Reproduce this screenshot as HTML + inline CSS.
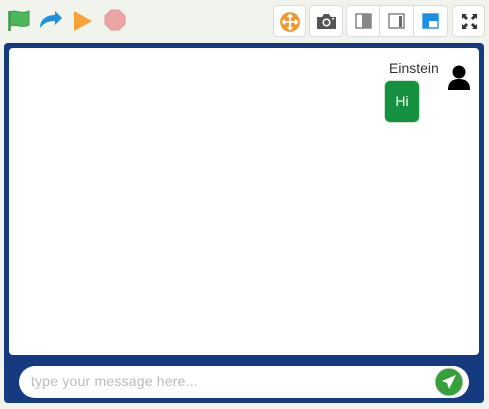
<!DOCTYPE html>
<html><head><style>
body{margin:0;width:489px;height:409px;background:#f0f4ec;font-family:"Liberation Sans",sans-serif;position:relative;overflow:hidden}
.a{position:absolute}
.btn{position:absolute;top:5px;height:32px;background:#fff;border:1px solid #dcdcdc;border-radius:4px;box-sizing:border-box}
</style></head><body>
<svg class="a" style="left:0;top:0" width="135" height="40" viewBox="0 0 135 40">
<path d="M9.5 11 V31" stroke="#3a9a48" stroke-width="2.5"/>
<path d="M10 12 C16 9,21 15,29 11 V25 C21 29,16 23,10 26Z" fill="#4cb75a" stroke="#3a9a48" stroke-width="1"/>
<path d="M40 28 C40 19,47 15,55 15 V11 L62 18 L55 25 V21 C48 21,44 23,40 28Z" fill="#1e90e0"/>
<path d="M74 11 L92 21 L74 31Z" fill="#f9a134"/>
<path d="M111 10 H119 L125 16 V24 L119 30 H111 L105 24 V16Z" fill="#eca4a4" stroke="#e69a9a"/>
</svg>
<div class="btn" style="left:273px;width:33px"><svg class="a" style="left:5px;top:5px" width="22" height="22" viewBox="0 0 20 20"><circle cx="10" cy="10" r="9" fill="#f2972e"/><path d="M10 3V17M3 10H17M10 3l-2 2.5M10 3l2 2.5M10 17l-2-2.5M10 17l2-2.5M3 10l2.5-2M3 10l2.5 2M17 10l-2.5-2M17 10l-2.5 2" stroke="#fff" stroke-width="1.6" fill="none"/></svg></div>
<div class="btn" style="left:309px;width:34px"><svg class="a" style="left:6px;top:7px" width="21" height="17" viewBox="0 0 21 17"><path d="M1 4H6L8 1H13L15 4H20V16H1Z" fill="#555"/><circle cx="10.5" cy="9.5" r="4" fill="#fff"/><circle cx="10.5" cy="9.5" r="2.5" fill="#555"/><rect x="16" y="5" width="2" height="1.4" fill="#fff"/></svg></div>
<div class="btn" style="left:346px;width:102px"></div>
<div class="a" style="left:379px;top:5px;width:1px;height:32px;background:#dcdcdc"></div>
<div class="a" style="left:413px;top:5px;width:1px;height:32px;background:#dcdcdc"></div>
<svg class="a" style="left:355px;top:13px" width="17" height="16"><rect x="1" y="1" width="15" height="14" fill="#fff" stroke="#666" stroke-width="1.2"/><rect x="7" y="1" width="9" height="14" fill="#888"/></svg>
<svg class="a" style="left:388px;top:13px" width="17" height="16"><rect x="1" y="1" width="15" height="14" fill="#fff" stroke="#666" stroke-width="1.2"/><rect x="11" y="3" width="3" height="11" fill="#666"/></svg>
<svg class="a" style="left:422px;top:13px" width="17" height="16"><rect x="1" y="1" width="15" height="14" fill="#fff" stroke="#1e8fe0" stroke-width="1.4"/><rect x="1" y="1" width="6" height="14" fill="#1e8fe0"/><rect x="7" y="1" width="9" height="7" fill="#1e8fe0"/></svg>
<div class="btn" style="left:452px;width:33px"><svg class="a" style="left:9px;top:8px" width="15" height="15" viewBox="0 0 15 15" fill="#333"><path d="M0 0H5L3.5 1.5L6 4L4 6L1.5 3.5L0 5ZM15 0V5L13.5 3.5L11 6L9 4L11.5 1.5L10 0ZM0 15V10L1.5 11.5L4 9L6 11L3.5 13.5L5 15ZM15 15H10L11.5 13.5L9 11L11 9L13.5 11.5L15 10Z"/></svg></div>
<div class="a" style="left:4px;top:43px;width:480px;height:360px;background:#163a80;border-radius:4px"></div>
<div class="a" style="left:9px;top:48px;width:470px;height:307px;background:#fff;border-radius:4px"></div>
<div class="a" style="left:389px;top:60px;font-size:14px;color:#333">Einstein</div>
<svg class="a" style="left:447px;top:65px" width="24" height="26" viewBox="0 0 24 26"><circle cx="12" cy="7" r="6.5" fill="#000"/><path d="M1 25 C1 17,5 14,12 14 C19 14,23 17,23 25Z" fill="#000"/></svg>
<div class="a" style="left:385px;top:81px;width:34px;height:41px;background:#15903f;border-radius:5px;box-shadow:0 0 0 1px #cfe3d3;color:#fff;font-size:14px;line-height:41px;text-align:center">Hi</div>
<div class="a" style="left:19px;top:366px;width:450px;height:32px;background:#fff;border-radius:16px"></div>
<div class="a" style="left:31px;top:373px;font-size:14px;color:#bbb;letter-spacing:0.2px">type your message here...</div>
<svg class="a" style="left:434px;top:367px" width="30" height="30" viewBox="0 0 30 30"><circle cx="15" cy="15" r="14" fill="#38a03a" stroke="#e4e4e4" stroke-width="1"/><path d="M22 8 L8 14 L13 16 L15 22Z" fill="#fff"/></svg>
</body></html>
